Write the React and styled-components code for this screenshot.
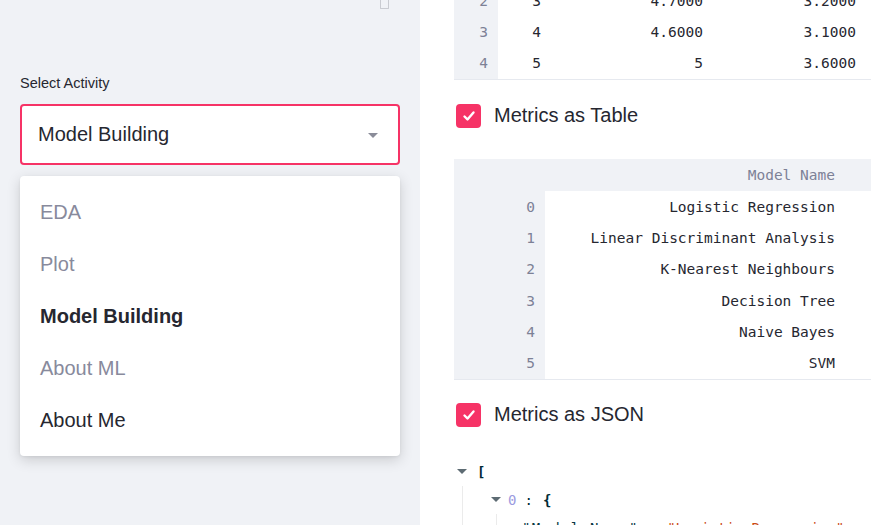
import React from "react";
import styled, { createGlobalStyle } from "styled-components";

const GlobalStyle = createGlobalStyle`
  html, body {
    margin: 0;
    padding: 0;
    height: 100%;
    overflow: hidden;
    background: #ffffff;
  }
  body {
    font-family: "Liberation Sans", Arial, sans-serif;
    color: #262730;
  }
`;

const PINK = "#f63366";
const GRAY_BG = "#f0f2f6";
const MUTED = "#7d8196";
const MONO = `"DejaVu Sans Mono", "Liberation Mono", monospace`;

const Page = styled.div`
  display: flex;
  width: 871px;
  height: 525px;
  overflow: hidden;
`;

// left side panel with the activity picker
const Sidebar = styled.aside`
  width: 420px;
  flex-shrink: 0;
  box-sizing: border-box;
  padding: 0 20px;
  background: ${GRAY_BG};
  display: flex;
  flex-direction: column;
`;

const SidebarTop = styled.div`
  display: flex;
  justify-content: flex-end;
  height: 9px;
  padding-right: 11px;
`;

const CloseStub = styled.span`
  width: 7px;
  height: 8px;
  border: 1px solid #c9cbd1;
  border-top: none;
  border-radius: 0 0 1px 1px;
`;

const FieldLabel = styled.label`
  margin-top: 64px;
  font-size: 14.5px;
  line-height: 20px;
`;

const SelectWrap = styled.div`
  position: relative;
  margin-top: 11px;
`;

const SelectBox = styled.div`
  height: 61px;
  box-sizing: border-box;
  border: 2px solid ${PINK};
  border-radius: 4px;
  background: #fff;
  display: flex;
  align-items: center;
  justify-content: space-between;
  padding: 0 20px 0 16px;
  font-size: 20px;
`;

const Caret = styled.span`
  width: 0;
  height: 0;
  border-left: 5px solid transparent;
  border-right: 5px solid transparent;
  border-top: 5px solid #8a8c99;
  margin-top: 1px;
`;

const Menu = styled.ul`
  position: absolute;
  top: 72px;
  left: 0;
  right: 0;
  margin: 0;
  padding: 10px 0;
  list-style: none;
  background: #fff;
  border-radius: 4px;
  box-shadow: 0 4px 14px rgba(0, 0, 0, 0.16), 0 1px 3px rgba(0, 0, 0, 0.06);
  z-index: 2;
`;

const MenuItem = styled.li`
  height: 52px;
  display: flex;
  align-items: center;
  padding-left: 20px;
  font-size: 20px;
  font-weight: ${(p) => (p.$selected ? 700 : 400)};
  color: ${(p) => (p.$muted ? "#888a9c" : "#262730")};
`;

// main report area
const Main = styled.main`
  flex: 1;
  min-width: 0;
  background: #fff;
  padding-left: 34px;
  overflow: hidden;
`;

const Table = styled.table`
  width: ${(p) => p.$width}px;
  border-collapse: collapse;
  table-layout: fixed;
  font-family: ${MONO};
  font-size: 14.5px;
  color: #262730;
  margin-top: ${(p) => p.$offset || 0}px;
  border-bottom: 1px solid #e6e9ef;
`;

const HeadCell = styled.th`
  height: 32px;
  padding: 0 10px;
  background: ${GRAY_BG};
  color: ${MUTED};
  font-weight: 400;
  text-align: right;
  white-space: nowrap;
`;

const IndexCell = styled.th`
  height: 31.33px;
  padding: 0 10px;
  background: ${GRAY_BG};
  color: ${MUTED};
  font-weight: 400;
  text-align: right;
`;

const Cell = styled.td`
  height: 31.33px;
  padding: 0 10px;
  text-align: right;
  white-space: nowrap;
  overflow: hidden;
`;

const CheckRow = styled.label`
  display: flex;
  align-items: center;
  gap: 13px;
  margin-top: ${(p) => p.$top}px;
  font-size: 20px;
  height: 24px;
`;

const CheckBox = styled.span`
  width: 25px;
  height: 24px;
  margin-left: 2px;
  border-radius: 4px;
  background: ${PINK};
  display: flex;
  align-items: center;
  justify-content: center;
`;

const JsonView = styled.div`
  margin-top: 31px;
  font-family: ${MONO};
  font-size: 14px;
`;

const JsonLine = styled.div`
  display: flex;
  align-items: center;
  height: 28px;
  white-space: nowrap;
`;

const Toggle = styled.span`
  width: 0;
  height: 0;
  border-left: 5px solid transparent;
  border-right: 5px solid transparent;
  border-top: 5px solid #5d6b73;
  margin: 0 ${(p) => p.$gap}px 0 3px;
`;

const JsonNest = styled.div`
  margin-left: ${(p) => p.$indent}px;
  padding-left: ${(p) => p.$pad}px;
  border-left: 1px solid #ebebeb;
`;

const Bracket = styled.span`
  color: #002b36;
  font-weight: 700;
`;

const ArrayKey = styled.span`
  color: #9b9be0;
`;

const Colon = styled.span`
  color: #002b36;
  margin: 0 10px 0 ${(p) => p.$left || 8}px;
`;

const JsonKey = styled.span`
  color: #073642;
  letter-spacing: 1.3px;
`;

const JsonString = styled.span`
  color: #cb4b16;
`;

const Check = () => (
  <svg width="14" height="14" viewBox="0 0 14 14">
    <polyline
      points="2.5,7.5 5.5,10.5 11.5,3.5"
      fill="none"
      stroke="#fff"
      strokeWidth="2.4"
      strokeLinecap="round"
      strokeLinejoin="round"
    />
  </svg>
);

const activities = [
  { name: "EDA", muted: true },
  { name: "Plot", muted: true },
  { name: "Model Building", selected: true },
  { name: "About ML", muted: true },
  { name: "About Me" },
];

const irisRows = [
  ["2", "3", "4.7000", "3.2000", "1.3000"],
  ["3", "4", "4.6000", "3.1000", "1.5000"],
  ["4", "5", "5", "3.6000", "1.4000"],
];

const models = [
  ["Logistic Regression", "0.9583"],
  ["Linear Discriminant Analysis", "0.9750"],
  ["K-Nearest Neighbours", "0.9583"],
  ["Decision Tree", "0.9417"],
  ["Naive Bayes", "0.9500"],
  ["SVM", "0.9833"],
];

export default function App() {
  return (
    <>
      <GlobalStyle />
      <Page>
        <Sidebar>
          <SidebarTop>
            <CloseStub />
          </SidebarTop>
          <FieldLabel>Select Activity</FieldLabel>
          <SelectWrap>
            <SelectBox>
              <span>Model Building</span>
              <Caret />
            </SelectBox>
            <Menu>
              {activities.map((a) => (
                <MenuItem key={a.name} $muted={a.muted} $selected={a.selected}>
                  {a.name}
                </MenuItem>
              ))}
            </Menu>
          </SelectWrap>
        </Sidebar>

        <Main>
          <Table $offset={-15} $width={565}>
            <colgroup>
              <col style={{ width: 44 }} />
              <col style={{ width: 53 }} />
              <col style={{ width: 162 }} />
              <col style={{ width: 153 }} />
              <col style={{ width: 153 }} />
            </colgroup>
            <tbody>
              {irisRows.map((r) => (
                <tr key={r[0]}>
                  <IndexCell>{r[0]}</IndexCell>
                  {r.slice(1).map((v, i) => (
                    <Cell key={i}>{v}</Cell>
                  ))}
                </tr>
              ))}
            </tbody>
          </Table>

          <CheckRow $top={24}>
            <CheckBox>
              <Check />
            </CheckBox>
            Metrics as Table
          </CheckRow>

          <Table $offset={31} $width={511}>
            <colgroup>
              <col style={{ width: 91 }} />
              <col style={{ width: 300 }} />
              <col style={{ width: 120 }} />
            </colgroup>
            <thead>
              <tr>
                <HeadCell />
                <HeadCell>Model Name</HeadCell>
                <HeadCell>Accuracy</HeadCell>
              </tr>
            </thead>
            <tbody>
              {models.map((m, i) => (
                <tr key={m[0]}>
                  <IndexCell>{i}</IndexCell>
                  <Cell>{m[0]}</Cell>
                  <Cell>{m[1]}</Cell>
                </tr>
              ))}
            </tbody>
          </Table>

          <CheckRow $top={23}>
            <CheckBox>
              <Check />
            </CheckBox>
            Metrics as JSON
          </CheckRow>

          <JsonView>
            <JsonLine>
              <Toggle $gap={10} />
              <Bracket>[</Bracket>
            </JsonLine>
            <JsonNest $indent={8} $pad={25}>
              <JsonLine>
                <Toggle $gap={7} />
                <ArrayKey>0</ArrayKey>
                <Colon>:</Colon>
                <Bracket>{"{"}</Bracket>
              </JsonLine>
              <JsonNest $indent={8} $pad={25}>
                <JsonLine>
                  <JsonKey>"Model Name"</JsonKey>
                  <Colon $left={10}>:</Colon>
                  <JsonString>"Logistic Regression"</JsonString>
                </JsonLine>
              </JsonNest>
            </JsonNest>
          </JsonView>
        </Main>
      </Page>
    </>
  );
}
